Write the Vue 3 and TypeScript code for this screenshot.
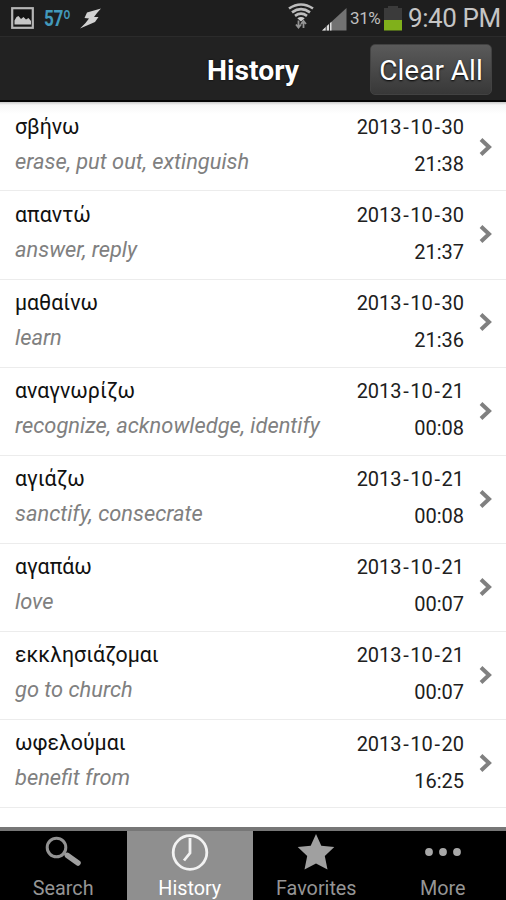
<script setup lang="ts">
interface Entry {
  word: string
  gloss: string
  date: string
  time: string
}

const entries: Entry[] = [
  { word: 'σβήνω', gloss: 'erase, put out, extinguish', date: '2013-10-30', time: '21:38' },
  { word: 'απαντώ', gloss: 'answer, reply', date: '2013-10-30', time: '21:37' },
  { word: 'μαθαίνω', gloss: 'learn', date: '2013-10-30', time: '21:36' },
  { word: 'αναγνωρίζω', gloss: 'recognize, acknowledge, identify', date: '2013-10-21', time: '00:08' },
  { word: 'αγιάζω', gloss: 'sanctify, consecrate', date: '2013-10-21', time: '00:08' },
  { word: 'αγαπάω', gloss: 'love', date: '2013-10-21', time: '00:07' },
  { word: 'εκκλησιάζομαι', gloss: 'go to church', date: '2013-10-21', time: '00:07' },
  { word: 'ωφελούμαι', gloss: 'benefit from', date: '2013-10-20', time: '16:25' },
]

const dateParts = (date: string): string[] => date.split(/(-)/)
</script>

<template>
  <div class="screen">
    <div class="status">
      <svg class="picture" width="23" height="22" viewBox="0 0 23 22">
        <rect x="1.200" y="1.200" width="20.600" height="19.600" fill="#151515" stroke="#b5b5b5" stroke-width="2.200" />
        <path d="M3.500 17.500v-4l2-3.500 2-1 2.500 3 2.500-2 2.500 2.500 2.500-1.500 2.500 3v3.500z" fill="#c6c6c6" />
      </svg>
      <span class="temp">57º</span>
      <svg class="bolt" width="22" height="21" viewBox="0 0 22 21">
        <path d="M21 .500 7 4.500 4.500 10l4.500.500L5.500 15 0 20.500l15-6.500L18.500 9h-4.500l3-4z" fill="#d2d2d2" />
      </svg>
      <svg class="wifi" width="26" height="27" viewBox="0 0 26 27">
        <g fill="none" stroke="#bcbcbc" stroke-width="2.700">
          <path d="M1 5.500Q13-2.500 25 5.500" />
          <path d="M4 9.300Q13 3 22 9.300" />
          <path d="M7 12.800Q13 8.500 19 12.800" />
        </g>
        <path d="M9.300 15.300q3.700-2.500 7.400 0L13 18.500z" fill="#cacaca" />
        <path d="M10.500 17.500v7M8 21.500l2.500 3 2.500-3M15.500 25v-7M13 21l2.500-3 2.500 3" fill="none" stroke="#959595" stroke-width="1.800" />
      </svg>
      <svg class="signal" width="25" height="23" viewBox="0 0 25 23">
        <path d="M0 22.500 24.500 0v22.500z" fill="#727272" />
        <path d="M0 22.500 9.500 13.700v8.800z" fill="#dedede" />
        <path d="M4.200 17v6M7.500 15v8" stroke="#333" stroke-width="1" />
      </svg>
      <span class="percent">31%</span>
      <svg class="battery" width="18" height="26" viewBox="0 0 18 26">
        <path d="M0 3h4V1h10v2h4v12H0z" fill="#3b3b3b" />
        <path d="M0 15h18v10.500H0z" fill="#80b01b" />
      </svg>
      <span class="clock">9:40 PM</span>
    </div>
    <header class="titlebar">
      <h1>History</h1>
      <button class="clear" type="button">Clear All</button>
    </header>
    <main class="list">
      <article v-for="entry in entries" :key="entry.word" class="row">
        <div class="term">
          <div class="word">{{ entry.word }}</div>
          <div class="gloss">{{ entry.gloss }}</div>
        </div>
        <div class="when">
          <div class="date"><span v-for="(part, i) in dateParts(entry.date)" :key="i" :class="{ dash: part === '-' }">{{ part }}</span></div>
          <div class="time">{{ entry.time }}</div>
        </div>
        <svg class="chevron" width="14" height="20" viewBox="0 0 14 20">
          <path d="M2 2.500 10 10 2 17.500" fill="none" stroke="#808080" stroke-width="4" />
        </svg>
      </article>
    </main>
    <nav class="tabs">
      <div class="tab">
        <svg width="38" height="38" viewBox="0 0 38 38">
          <circle cx="12.500" cy="14.500" r="9.300" fill="none" stroke="#929292" stroke-width="3" />
          <path d="m20 20 4 3" stroke="#929292" stroke-width="3" />
          <path d="m23.500 22.500 10.500 7.500" stroke="#a0a0a0" stroke-width="5.500" stroke-linecap="round" />
        </svg>
        <span>Search</span>
      </div>
      <div class="tab active">
        <svg width="38" height="38" viewBox="0 0 38 38">
          <circle cx="19" cy="19.500" r="16.800" fill="none" stroke="#f2f2f2" stroke-width="2.800" />
          <path d="M19 5v15l-6 7.500" fill="none" stroke="#f2f2f2" stroke-width="2.800" />
        </svg>
        <span>History</span>
      </div>
      <div class="tab">
        <svg width="38" height="38" viewBox="0 0 38 38">
          <path d="m19 1 5.300 11.800L37.300 14l-9.500 9 2.700 13.500L19 30.500 7.500 36.500 10.200 23 .7 14l13-1.200z" fill="#a0a0a0" />
        </svg>
        <span>Favorites</span>
      </div>
      <div class="tab">
        <svg width="38" height="38" viewBox="0 0 38 38">
          <g fill="#a8a8a8">
            <circle cx="5" cy="19" r="3.900" />
            <circle cx="19" cy="19" r="3.900" />
            <circle cx="33" cy="19" r="3.900" />
          </g>
        </svg>
        <span>More</span>
      </div>
    </nav>
  </div>
</template>

<style>
body {
  margin: 0;
  background: #fff;
}
</style>

<style scoped>
.screen {
  display: flex;
  flex-direction: column;
  width: 506px;
  height: 900px;
  overflow: hidden;
  background: #fff;
  font-family: Roboto, 'Noto Sans', sans-serif;
}
.status {
  display: flex;
  flex: none;
  align-items: flex-start;
  box-sizing: border-box;
  height: 37px;
  padding-left: 11px;
  border-bottom: 1px solid #2b2b2b;
  background: #1e1e1e;
  white-space: nowrap;
}
.status svg {
  flex: none;
}
.picture {
  margin-top: 7px;
}
.temp {
  width: 26px;
  margin: 7px 0 0 10px;
  color: #4299bb;
  font: bold 22px/24px Roboto, sans-serif;
  letter-spacing: -0.5px;
  transform: scaleX(0.78);
  transform-origin: left;
}
.bolt {
  margin: 8px 0 0 10px;
}
.wifi {
  margin: 3px 0 0 186px;
}
.signal {
  margin: 8px 0 0 8px;
}
.percent {
  width: 31px;
  margin: 7px 0 0 3px;
  color: #bfbfbf;
  font-size: 17px;
  line-height: 22px;
  letter-spacing: -0.4px;
}
.battery {
  margin: 5px 0 0 3px;
}
.clock {
  margin: 3px 0 0 6px;
  color: #c5c5c5;
  font-size: 26px;
  line-height: 30px;
  letter-spacing: -0.4px;
}
.titlebar {
  display: grid;
  flex: none;
  grid-template-columns: 1fr auto 1fr;
  align-items: center;
  box-sizing: border-box;
  height: 65px;
  border-bottom: 2px solid #050505;
  background: #222;
}
h1 {
  grid-column: 2;
  margin: 4px 0 0;
  color: #fff;
  font-size: 28.3px;
  font-weight: 700;
  line-height: 34px;
  text-shadow: 0 0 2px #000;
}
.clear {
  justify-self: end;
  box-sizing: border-box;
  width: 122px;
  height: 51px;
  margin: 1px 14px 0 0;
  padding: 3px 0 0;
  border: 1px solid #424242;
  border-radius: 5px;
  background: linear-gradient(#5a5a5a, #383838);
  color: #fff;
  font: 28px/34px Roboto, sans-serif;
  text-shadow: 0 1px 2px #000;
  white-space: nowrap;
}
.list {
  flex: 1;
  min-height: 0;
  background: linear-gradient(#c8c8c8, #f6f6f6 3px, #fff 12px);
}
.row {
  display: flex;
  box-sizing: border-box;
  height: 88.15px;
  padding: 8.4px 13px 0 15px;
  border-bottom: 1px solid #ececec;
}
.row:first-child {
  height: 89.4px;
  padding-top: 10px;
}
.term {
  flex: 1;
  padding-top: 0.8px;
  white-space: nowrap;
}
.word {
  height: 35px;
  color: #111;
  font-size: 21.3px;
  line-height: 28px;
}
.gloss {
  color: #808080;
  font-size: 21.85px;
  font-style: italic;
  line-height: 28px;
}
.when {
  color: #202020;
  font-size: 20px;
  text-align: right;
  line-height: 28px;
}
.date {
  height: 37px;
  margin-top: 1px;
}
.dash {
  padding: 0 1.6px;
}
.chevron {
  flex: none;
  margin: 24.5px 0 0 15px;
}
.tabs {
  display: grid;
  flex: none;
  grid-template-columns: repeat(4, 1fr);
  height: 69px;
  border-top: 4px solid #777;
  background: #000;
}
.tab {
  display: flex;
  flex-direction: column;
  align-items: center;
  color: #959595;
  font-size: 19.8px;
}
.tab span {
  margin-top: 5px;
  line-height: 26px;
}
.tab svg {
  flex: none;
  margin-top: 2px;
}
.active {
  background: #8f8f8f;
  color: #fff;
}
</style>
